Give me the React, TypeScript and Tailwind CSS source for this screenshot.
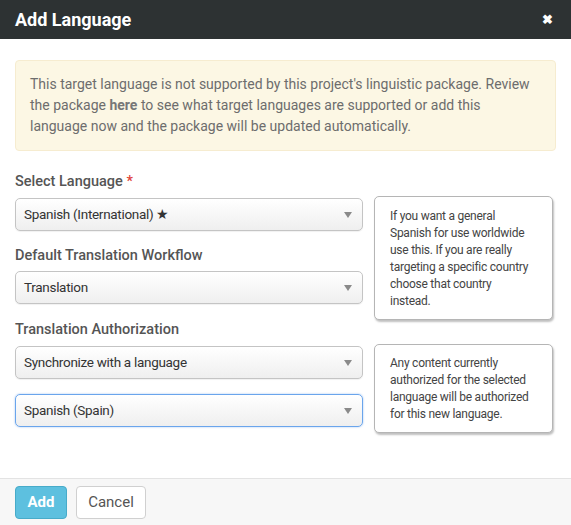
import React from "react";

const font = {
  fontFamily: '"Roboto", "Liberation Sans", sans-serif',
};

function Caret() {
  return (
    <svg width="8" height="6" viewBox="0 0 8 6" className="shrink-0">
      <path d="M0 0 L8 0 L4 6 Z" fill="#8a8a8a" />
    </svg>
  );
}

function FakeSelect({ value, focused }: { value: React.ReactNode; focused?: boolean }) {
  return (
    <div
      className={
        "flex h-[33px] w-[348px] items-center justify-between rounded-[5px] border bg-gradient-to-b from-white to-[#efefef] pl-[8px] pr-[10px] text-[13.5px] tracking-[-0.3px] text-[#333] " +
        (focused
          ? "border-[#6aa5ec] shadow-[0_0_2px_rgba(82,145,230,0.6)]"
          : "border-[#c4c4c4] shadow-[0_1px_1px_rgba(0,0,0,0.06)]")
      }
    >
      <span>{value}</span>
      <Caret />
    </div>
  );
}

function HelpBox({ lines, className }: { lines: string[]; className?: string }) {
  return (
    <div
      className={
        "w-[179px] rounded-[5px] border border-[#b5b5b5] bg-white px-[15px] text-[12px] leading-[17px] tracking-[-0.25px] text-[#444] shadow-[1px_2px_2px_rgba(0,0,0,0.25)] " +
        (className ?? "")
      }
    >
      {lines.map((l) => (
        <div key={l} className="whitespace-nowrap">
          {l}
        </div>
      ))}
    </div>
  );
}

export default function App() {
  return (
    <div className="flex h-[525px] w-[571px] flex-col bg-white" style={font}>
      <div className="flex h-[39px] items-center justify-between bg-[#2d3233] pl-[15px] pr-[18px]">
        <h1 className="text-[18px] font-bold text-white">Add Language</h1>
        <span className="text-[13px] font-bold leading-none text-white">✖</span>
      </div>

      <div className="flex-1 px-[15px] pt-[21px]">
        <div className="rounded-[4px] border border-[#f6ecd0] bg-[#fcf7e4] px-[14px] pb-[13px] pt-[13px] text-[14px] leading-[21px] text-[#6d6d6d]">
          This target language is not supported by this project's linguistic package. Review
          the package <b className="text-[#777]">here</b> to see what target languages are supported or add this
          language now and the package will be updated automatically.
        </div>

        <div className="mt-[21px] flex gap-[11px]">
          <div className="flex flex-col">
            <label className="text-[14.5px] font-medium leading-[20px] text-[#555]">
              Select Language <span className="text-[#e0423a]">*</span>
            </label>
            <div className="mt-[6px]">
              <FakeSelect value="Spanish (International) ★" />
            </div>
            <label className="mt-[15px] text-[14.5px] font-medium leading-[20px] text-[#555]">
              Default Translation Workflow
            </label>
            <div className="mt-[5px]">
              <FakeSelect value="Translation" />
            </div>
            <label className="mt-[16px] text-[14.5px] font-medium leading-[20px] text-[#555]">
              Translation Authorization
            </label>
            <div className="mt-[6px]">
              <FakeSelect value="Synchronize with a language" />
            </div>
            <div className="mt-[15px]">
              <FakeSelect value="Spanish (Spain)" focused />
            </div>
          </div>

          <div className="flex flex-col pt-[24px]">
            <HelpBox
              className="h-[124px] pt-[11px]"
              lines={[
                "If you want a general",
                "Spanish for use worldwide",
                "use this. If you are really",
                "targeting a specific country",
                "choose that country",
                "instead.",
              ]}
            />
            <HelpBox
              className="mt-[24px] h-[89px] pt-[10px]"
              lines={[
                "Any content currently",
                "authorized for the selected",
                "language will be authorized",
                "for this new language.",
              ]}
            />
          </div>
        </div>
      </div>

      <div className="flex h-[47px] items-center gap-[9px] border-t border-[#e3e3e3] bg-[#f7f7f7] px-[15px]">
        <button className="h-[33px] w-[52px] rounded-[4px] border border-[#47abc9] bg-[#5dc0df] text-[15px] font-bold text-white">
          Add
        </button>
        <button className="h-[33px] w-[70px] rounded-[4px] border border-[#d0d0d0] bg-white text-[15px] text-[#555]">
          Cancel
        </button>
      </div>
    </div>
  );
}
